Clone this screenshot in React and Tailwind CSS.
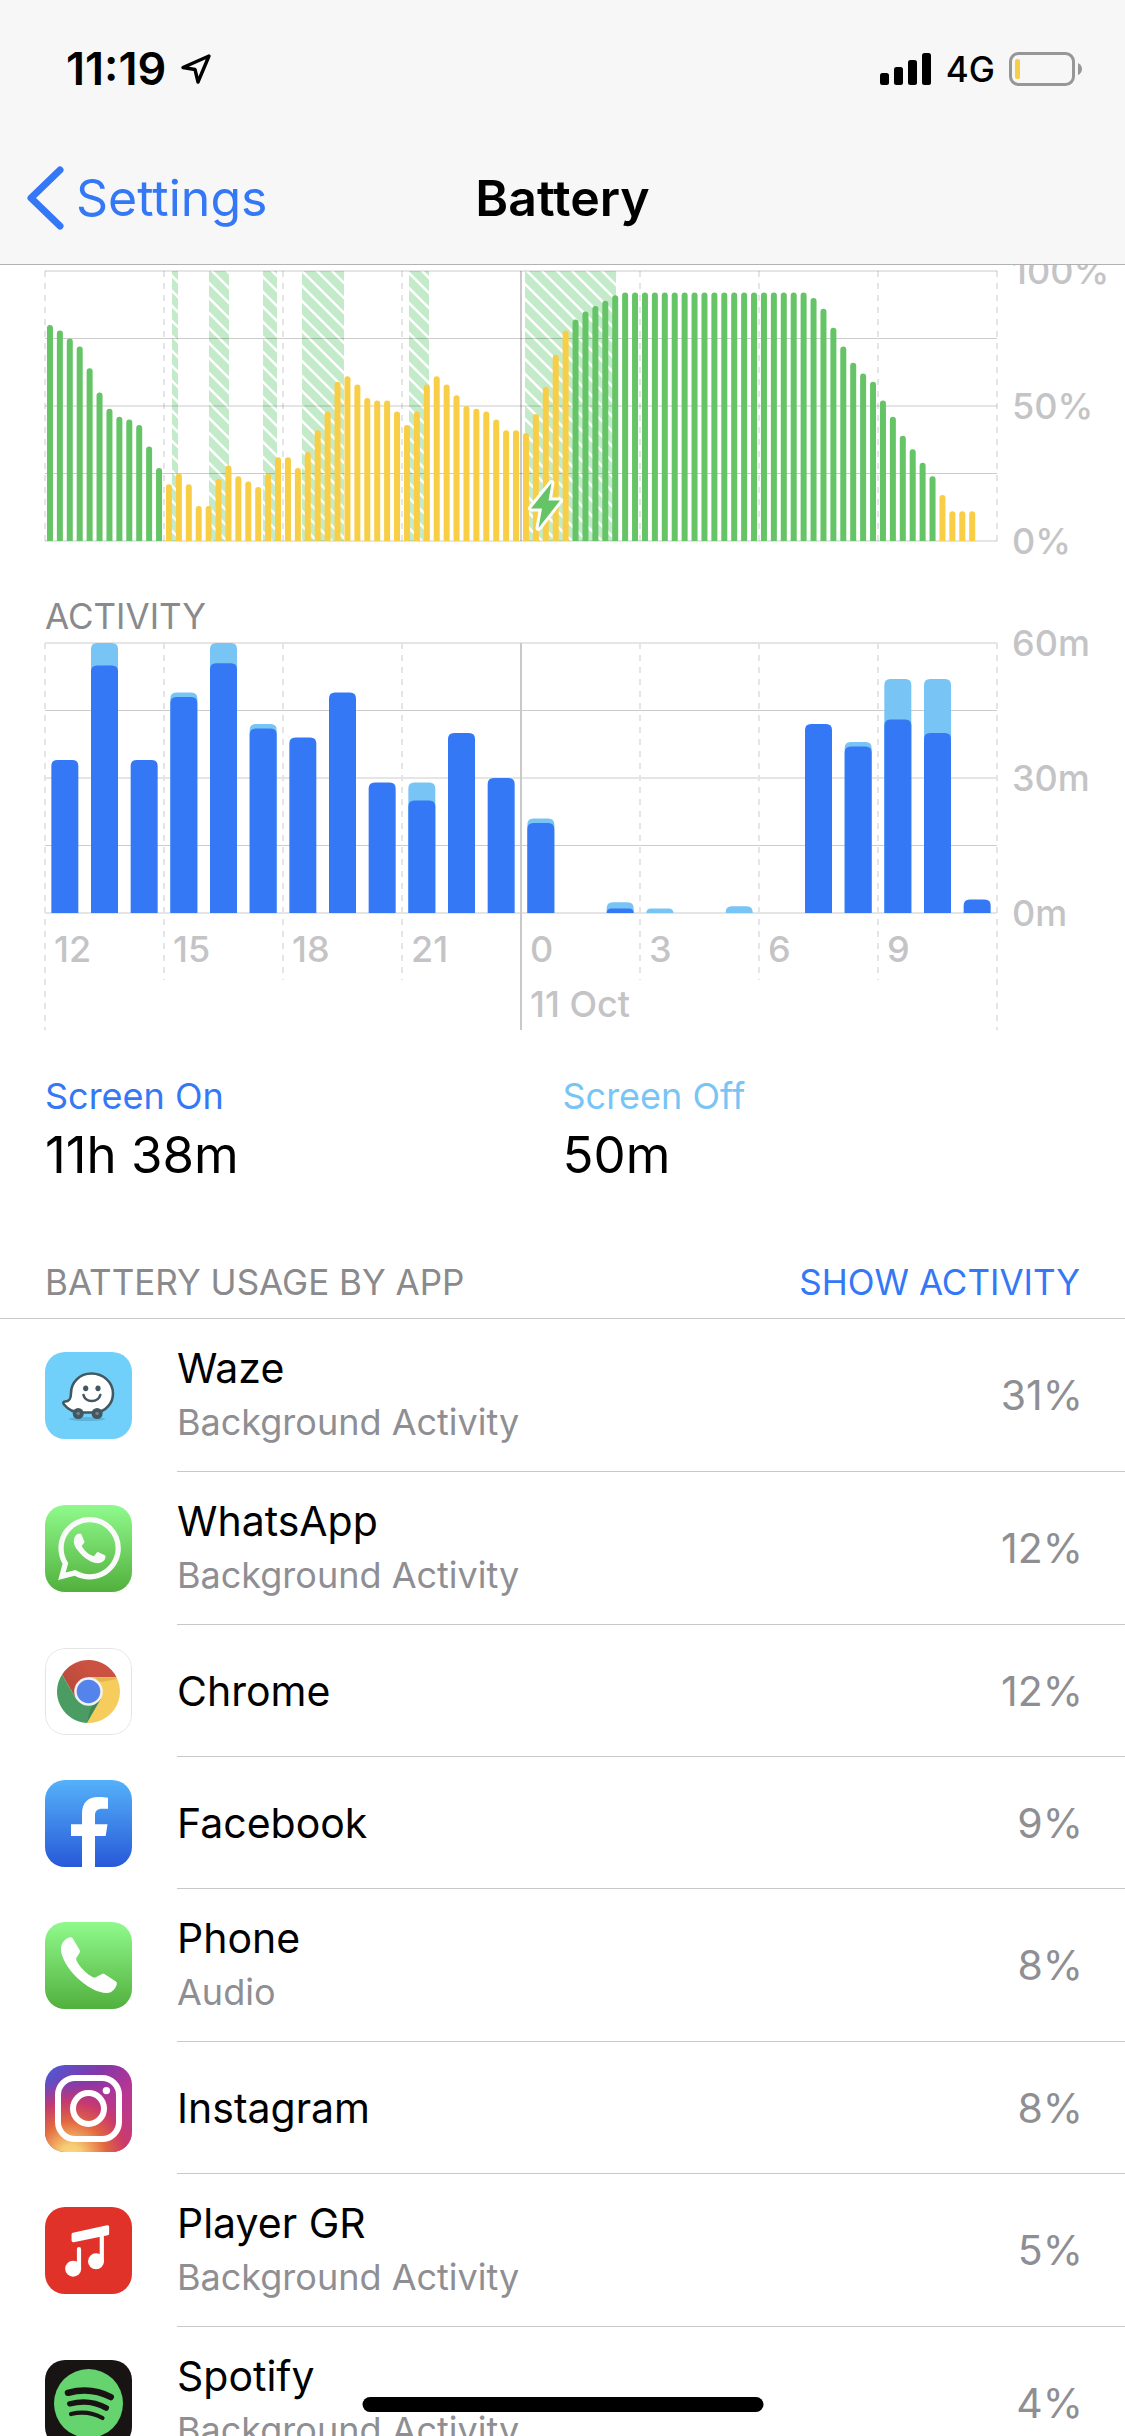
import React from 'react';
import { SiWhatsapp } from 'react-icons/si';

// one reading per 15 minutes, starting at noon
const levels = [
  80, 78, 75, 72, 64, 55, 49, 46, 45, 43, 35, 27,
  21, 25, 21, 13, 13, 23, 28, 24, 22, 20, 25, 31, 31, 27, 33, 41, 48, 59, 61, 58, 53, 52, 52, 48,
  43, 48, 58, 61, 58, 54, 50, 49, 48, 45, 41, 41, 40, 47, 57, 69, 78,
  82, 85, 87, 89, 91,
  92, 92, 92, 92, 92, 92, 92, 92, 92, 92, 92, 92, 92, 92, 92, 92, 92, 92, 92,
  90, 86, 79, 72, 66, 62, 59, 52, 46, 39, 34, 29, 24,
  17, 11, 11, 11,
];

const isLowPower = (i) => (i >= 12 && i <= 52) || i >= 90;

const charging = [
  { x: 172, w: 6 },
  { x: 209, w: 20 },
  { x: 263, w: 14 },
  { x: 302, w: 42 },
  { x: 409, w: 20 },
  { x: 525, w: 91 },
];

// minutes per hour: [total, screen on]
const activity = [
  [34, 34], [60, 55], [34, 34], [49, 48], [60, 55.5], [42, 41], [39, 39], [49, 49],
  [29, 29], [29, 25], [40, 40], [30, 30], [21, 20], [0, 0], [2.4, 1], [1, 0],
  [0, 0], [1.5, 0], [0, 0], [42, 42], [38, 37], [52, 43], [52, 40], [3, 3],
];

const hours = ['12', '15', '18', '21', '0', '3', '6', '9'];

const LEFT = 45;
const PLOT_W = 952;
const PLOT_H = 270;

const barPath = (x, w, h, r) => {
  const c = Math.min(r, h);
  return `M${x} ${PLOT_H}V${PLOT_H - h + c}q0 ${-c} ${c} ${-c}h${w - 2 * c}q${c} 0 ${c} ${c}V${PLOT_H}z`;
};

const GridLines = () => (
  <g fill="#000">
    {[0, 0.5, 1].map((f) => (
      <rect key={f} x={LEFT} y={PLOT_H * f - 1} width={PLOT_W} height="2" opacity="0.1" />
    ))}
    {[67, 202].map((y) => (
      <rect key={y} x={LEFT} y={y} width={PLOT_W} height="1" opacity="0.2" />
    ))}
  </g>
);

const AxisLabels = ({ labels }) => (
  <g fill="#c4c4c6" fontSize="36" fontWeight="500">
    {labels.map((label, i) => (
      <text key={label} x="1012" y={i * 135 + 13}>{label}</text>
    ))}
  </g>
);

const BatteryChart = () => (
  <svg viewBox="0 -6 1125 288" className="block w-full overflow-visible" role="img" aria-label="Battery level">
    <defs>
      <pattern id="hatch" x="525" y="0" width="15" height="15" patternUnits="userSpaceOnUse">
        <rect width="15" height="15" fill="#c3ebc9" />
        <path d="M-5 -7L20 18M-5 8L20 33M-5 -22L20 3" stroke="#fff" strokeWidth="2.6" />
      </pattern>
    </defs>
    {hours.concat('12').map((h, i) => (
      <line key={i} x1={LEFT + i * 119} x2={LEFT + i * 119} y1="0" y2={PLOT_H} stroke="#e5e5e7" strokeWidth="2" strokeDasharray="6 6" />
    ))}
    <rect x="520" y="0" width="2" height={PLOT_H} fill="#c9c9cd" />
    {charging.map((c) => (
      <rect key={c.x} x={c.x} y="0" width={c.w} height={PLOT_H} fill="url(#hatch)" />
    ))}
    <GridLines />
    {levels.map((v, i) => (
      <path
        key={i}
        d={barPath(LEFT + (i + 0.5) * (PLOT_W / 96) - 3, 6, v * 2.7, 3)}
        fill={isLowPower(i) ? '#f7ce46' : '#65c466'}
      />
    ))}
    <path
      d="M551.5 212L531 237.5H542L538.5 257L560 229.5H548.5z"
      fill="#65c466"
      stroke="#fff"
      strokeWidth="6"
      strokeLinejoin="round"
      paintOrder="stroke"
    />
    <AxisLabels labels={['100%', '50%', '0%']} />
  </svg>
);

const ActivityChart = () => (
  <svg viewBox="0 -3 1125 392" className="block w-full overflow-visible" role="img" aria-label="Activity per hour">
    <GridLines />
    {hours.concat('end').map((h, i) => (
      <line
        key={h}
        x1={LEFT + i * 119}
        x2={LEFT + i * 119}
        y1="0"
        y2={i === 0 || i === 8 ? 387 : 337}
        stroke="#e5e5e7"
        strokeWidth="2"
        strokeDasharray="6 6"
      />
    ))}
    <rect x="520" y="0" width="2" height="387" fill="#c9c9cb" />
    {activity.map(([total, on], i) => {
      const x = LEFT + (i + 0.5) * (PLOT_W / 24) - 13.5;
      return (
        <g key={i}>
          {total > on && <path d={barPath(x, 27, total * 4.5, 6)} fill="#78c5f5" />}
          {on > 0 && <path d={barPath(x, 27, on * 4.5, 6)} fill="#3478f6" />}
        </g>
      );
    })}
    <AxisLabels labels={['60m', '30m', '0m']} />
    <g fill="#c4c4c6" fontSize="36" fontWeight="500">
      {hours.map((h, i) => (
        <text key={h} x={LEFT + i * 119 + 9} y="319">{h}</text>
      ))}
      <text x="530" y="374">11 Oct</text>
    </g>
  </svg>
);

const WazeIcon = () => (
  <>
    <rect width="87" height="87" fill="#70d0fa" />
    <ellipse cx="42" cy="67" rx="18" ry="2" fill="#5cb4da" />
    <path
      d="M46.5 21.5C34.5 21.5 26 30.5 26 41C26 47 24.5 49.5 20 49.5C18 49.5 18 51 19 52.5C23 57.5 29 60.5 36 60.5H51C61 59.5 68 51 68 41.5C68 30.5 58.5 21.5 46.5 21.5z"
      fill="#fff"
      stroke="#435761"
      strokeWidth="2.6"
    />
    <g fill="#435761">
      <circle cx="33.2" cy="61.5" r="5.5" />
      <circle cx="52.1" cy="61.5" r="5.5" />
      <ellipse cx="40.7" cy="36.3" rx="2.6" ry="2.9" />
      <ellipse cx="53" cy="36.3" rx="2.6" ry="2.9" />
    </g>
    <circle cx="33.2" cy="61.5" r="1.8" fill="#71818a" />
    <circle cx="52.1" cy="61.5" r="1.8" fill="#71818a" />
    <path d="M38.5 43C40.5 51 53 51 55.3 43" fill="none" stroke="#435761" strokeWidth="2.6" strokeLinecap="round" />
  </>
);

const WhatsAppIcon = () => (
  <>
    <rect width="87" height="87" fill="url(#green)" />
    <SiWhatsapp x="13" y="12" size={63} color="#fafafa" />
  </>
);

const ChromeIcon = () => (
  <>
    <rect width="87" height="87" fill="#fff" />
    <path d="M17.1 26.4A31.4 31.4 0 0 1 71.5 29.2H43.5V43.5L31.1 50.7z" fill="url(#chromeRed)" />
    <path d="M71.5 29.2A31.4 31.4 0 0 1 41.9 74.9L55.9 50.7L43.5 43.5V29.2z" fill="#f6cd5c" />
    <path d="M41.9 74.9A31.4 31.4 0 0 1 17.1 26.4L31.1 50.7L43.5 43.5L55.9 50.7z" fill="#4a9c62" />
    <path d="M43.5 29.2H71.5L72 31L56 34z" fill="#c58a2e" opacity="0.35" />
    <path d="M55.9 50.7L41.9 74.9L45 62L50 53z" fill="#2f6b42" opacity="0.4" />
    <circle cx="43.5" cy="43.5" r="14.3" fill="#f1f1f1" />
    <circle cx="43.5" cy="43.5" r="11.8" fill="#5583ec" />
    <rect x="0.5" y="0.5" width="86" height="86" rx="19.5" fill="none" stroke="#e4e4e4" />
  </>
);

const FacebookIcon = () => (
  <>
    <rect width="87" height="87" fill="url(#facebook)" />
    <path
      d="M37 87V56H26V44.3H37V34C37 22.5 43 17 53.5 17C57 17 60.5 17.3 63 17.8V28.7H57.5C52 28.7 50 31 50 35.5V44.3H62.5L60.7 56H50V87z"
      fill="#fff"
    />
  </>
);

const PhoneIcon = () => (
  <>
    <rect width="87" height="87" fill="url(#green)" />
    <path
      d="M17 22C19 17.5 23 15.5 25.5 15.2C26.5 15.1 27.5 15.8 28.1 17L34.6 28C35.3 29.3 35 30.4 34.3 31.3L31.6 35.5C31 36.5 31 37.7 31.6 38.8C35 45.5 41.5 52 48 55.2C49.2 55.7 50.2 55.7 51.3 55L56.5 52.2C57.5 51.6 58.8 51.6 59.8 52.2L70.5 59.3C72 60.3 72.2 61.7 71.5 63.3C69.5 68 66.5 71 62 71C43 71 16 44 16 27C16 25 16.3 23.5 17 22z"
      fill="#fff"
    />
  </>
);

const InstagramIcon = () => (
  <>
    <rect width="87" height="87" fill="url(#instaBase)" />
    <rect width="87" height="87" fill="url(#instaGlow)" />
    <g fill="none" stroke="#fff" strokeWidth="6">
      <rect x="13" y="13" width="61" height="61" rx="17" />
      <circle cx="43.5" cy="43.5" r="15.5" />
    </g>
    <circle cx="61.4" cy="25.6" r="3.7" fill="#fff" />
  </>
);

const PlayerIcon = () => (
  <>
    <rect width="87" height="87" fill="#e13229" />
    <g fill="#fff" stroke="#fff" strokeLinejoin="round" strokeLinecap="round">
      <path d="M28.3 27.5L62.4 20V26.5L28.3 33.5z" strokeWidth="3.5" />
      <path d="M56.8 27V54M34 42V61" strokeWidth="4.2" />
      <circle cx="51" cy="54.3" r="8" stroke="none" />
      <circle cx="28.2" cy="61.7" r="8" stroke="none" />
    </g>
  </>
);

const SpotifyIcon = () => (
  <>
    <rect width="87" height="87" fill="#191414" />
    <circle cx="43.5" cy="43.5" r="34.5" fill="#65d46e" />
    <g fill="none" stroke="#191414" strokeLinecap="round">
      <path d="M23 32.8Q46 26.5 65.7 37" strokeWidth="6.5" />
      <path d="M24.8 43.8Q44.5 38.5 61.3 48" strokeWidth="5.5" />
      <path d="M26 54Q43 50 57.5 58" strokeWidth="4.2" />
    </g>
  </>
);

const apps = [
  { name: 'Waze', note: 'Background Activity', usage: '31%', Icon: WazeIcon },
  { name: 'WhatsApp', note: 'Background Activity', usage: '12%', Icon: WhatsAppIcon },
  { name: 'Chrome', usage: '12%', Icon: ChromeIcon },
  { name: 'Facebook', usage: '9%', Icon: FacebookIcon },
  { name: 'Phone', note: 'Audio', usage: '8%', Icon: PhoneIcon },
  { name: 'Instagram', usage: '8%', Icon: InstagramIcon },
  { name: 'Player GR', note: 'Background Activity', usage: '5%', Icon: PlayerIcon },
  { name: 'Spotify', note: 'Background Activity', usage: '4%', Icon: SpotifyIcon },
];

// Gradients shared by the app icons
const IconDefs = () => (
  <svg width="0" height="0" className="absolute" aria-hidden="true">
    <defs>
      <linearGradient id="green" x2="0" y2="1">
        <stop offset="0" stopColor="#8ffa8c" />
        <stop offset="1" stopColor="#52b03d" />
      </linearGradient>
      <linearGradient id="facebook" x2="0" y2="1">
        <stop offset="0" stopColor="#55b1fa" />
        <stop offset="1" stopColor="#2759d8" />
      </linearGradient>
      <linearGradient id="chromeRed" x1="0" y1="0.6" x2="0.5" y2="0.3">
        <stop offset="0" stopColor="#b84a3b" />
        <stop offset="1" stopColor="#cb5141" />
      </linearGradient>
      <linearGradient id="instaBase" x1="0" y1="0" x2="1" y2="1">
        <stop offset="0" stopColor="#4a5bd6" />
        <stop offset="0.35" stopColor="#8437a8" />
        <stop offset="0.6" stopColor="#b53694" />
        <stop offset="1" stopColor="#cf3f74" />
      </linearGradient>
      <radialGradient id="instaGlow" cx="0.3" cy="1.05" r="0.9">
        <stop offset="0" stopColor="#f8dc86" />
        <stop offset="0.15" stopColor="#f6ca73" />
        <stop offset="0.45" stopColor="#e2673f" />
        <stop offset="0.7" stopColor="#cc3a68" stopOpacity="0.9" />
        <stop offset="1" stopColor="#b03694" stopOpacity="0" />
      </radialGradient>
    </defs>
  </svg>
);

const StatusBar = () => (
  <div className="flex items-center justify-between h-[138px] pl-[66px] pr-[43px]">
    <div className="flex items-center gap-[14px]">
      <span className="text-[45px] leading-[48px] font-semibold">11:19</span>
      <svg width="32" height="32" viewBox="0 0 32 32" aria-hidden="true">
        <path d="M29 3L3 14.5L15 16.5L18 29z" fill="none" stroke="#000" strokeWidth="3.4" strokeLinejoin="round" />
      </svg>
    </div>
    <div className="flex items-center gap-[14px]">
      <svg width="52" height="32" viewBox="0 0 52 32" aria-hidden="true">
        <rect x="0" y="20" width="9" height="12" rx="2.5" />
        <rect x="14" y="14" width="9" height="18" rx="2.5" />
        <rect x="28" y="7" width="9" height="25" rx="2.5" />
        <rect x="42" y="0" width="9" height="32" rx="2.5" />
      </svg>
      <span className="text-[35px] leading-[48px] font-medium">4G</span>
      <svg width="73" height="34" viewBox="0 0 73 34" aria-hidden="true">
        <rect x="1.5" y="1.5" width="63" height="31" rx="8" fill="none" stroke="#979797" strokeWidth="3" />
        <path d="M69 11q4 2 4 6t-4 6z" fill="#979797" />
        <rect x="6" y="7" width="5" height="20" rx="2" fill="#f7ce46" />
      </svg>
    </div>
  </div>
);

const App = () => {
  return (
    <div className="relative h-screen overflow-hidden bg-white text-black font-[Inter,sans-serif]">
      <IconDefs />

      <header className="relative z-10 bg-[#f7f7f7] border-b border-[#b2b2b2]">
        <StatusBar />
        <nav className="grid grid-cols-3 items-center h-[126px] pb-[6px]">
          <a href="#settings" className="flex items-center gap-3 pl-[26px] text-[#3478f6] text-[50px] leading-[60px]">
            <svg width="38" height="64" viewBox="0 0 38 64" aria-hidden="true">
              <path d="M34 4L5 32L34 60" fill="none" stroke="#3478f6" strokeWidth="7" strokeLinecap="round" strokeLinejoin="round" />
            </svg>
            Settings
          </a>
          <h1 className="text-center text-[50px] leading-[60px] font-semibold">Battery</h1>
        </nav>
      </header>

      <main>
        <BatteryChart />
        <h2 className="px-[45px] pt-[39px] text-[35px] leading-[48px] text-[#8a8a8d]">ACTIVITY</h2>
        <ActivityChart />

        <dl className="grid grid-cols-2 pt-10">
          <div className="pl-[45px]">
            <dt className="text-[36px] leading-[48px] text-[#3478f6]">Screen On</dt>
            <dd className="mt-1 text-[51px] leading-[62px]">11h 38m</dd>
          </div>
          <div>
            <dt className="text-[36px] leading-[48px] text-[#78c5f5]">Screen Off</dt>
            <dd className="mt-1 text-[51px] leading-[62px]">50m</dd>
          </div>
        </dl>

        <div className="flex justify-between px-[45px] pt-[72px] pb-3 text-[35px] leading-[48px] border-b border-[#c8c7cc]">
          <h2 className="text-[#8a8a8d]">BATTERY USAGE BY APP</h2>
          <button type="button" className="text-[#3478f6]">SHOW ACTIVITY</button>
        </div>

        <ul>
          {apps.map(({ name, note, usage, Icon }) => (
            <li key={name} className="flex items-center pl-[45px]">
              <svg width="87" height="87" viewBox="0 0 87 87" className="shrink-0 rounded-[20px]" aria-hidden="true">
                <Icon />
              </svg>
              <div className={`flex flex-1 items-center justify-between ml-[45px] pr-[42px] border-b border-[#c8c7cc] ${note ? 'h-[153px]' : 'h-[132px]'}`}>
                <div className="flex flex-col gap-[6px]">
                  <span className="text-[41px] leading-[48px]">{name}</span>
                  {note && <span className="text-[36px] leading-[48px] text-[#8e8e93]">{note}</span>}
                </div>
                <span className="text-[41px] leading-[48px] text-[#8e8e93]">{usage}</span>
              </div>
            </li>
          ))}
        </ul>
      </main>

      {/* Home indicator */}
      <div className="absolute bottom-6 left-1/2 -translate-x-1/2 w-[401px] h-[15px] rounded-full bg-black"></div>
    </div>
  );
};

export default App;
